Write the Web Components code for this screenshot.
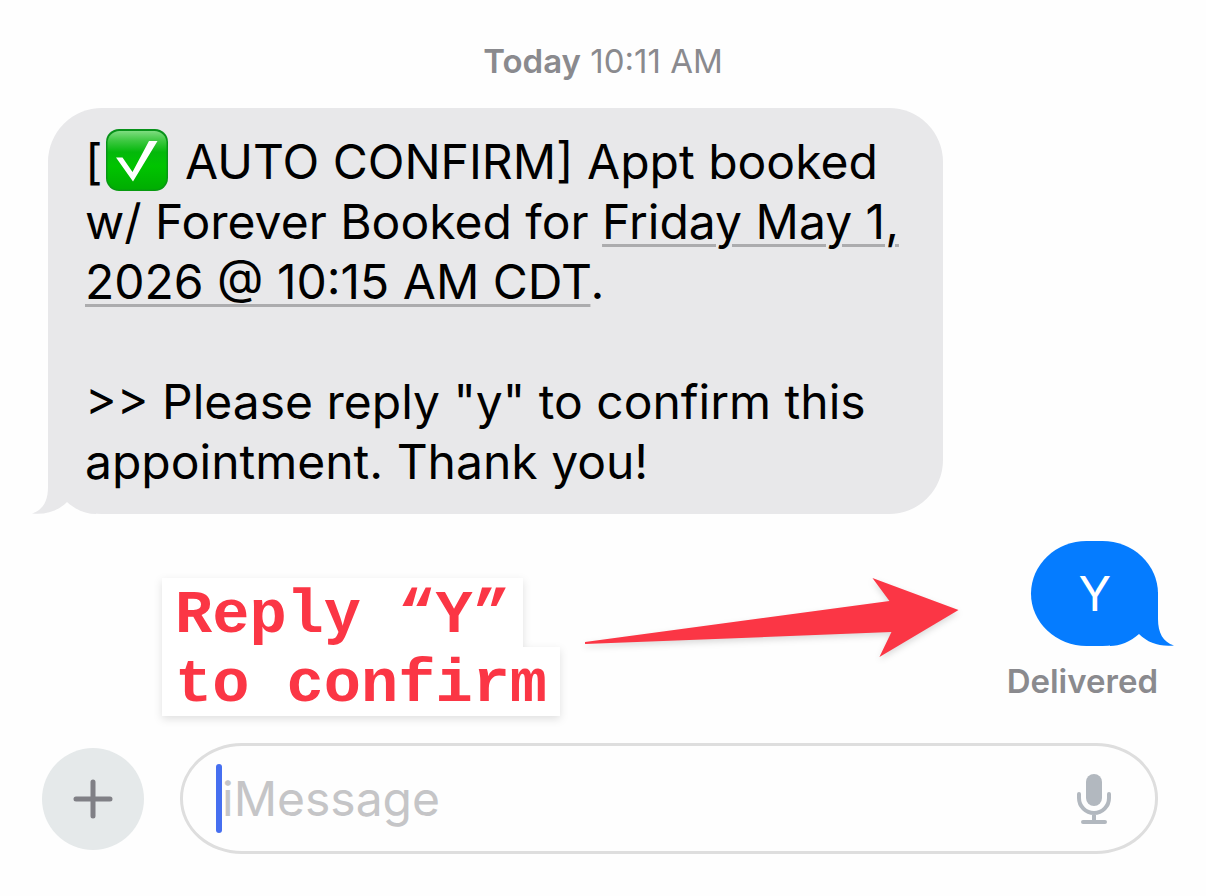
<!DOCTYPE html>
<html lang="en">
<head>
<meta charset="utf-8">
<meta name="viewport" content="width=device-width, initial-scale=1">
<title>Messages</title>
<style>
body {
    margin: 0;
    background: #fefefe;
    color: #000;
    font-family: Inter, "Liberation Sans", sans-serif;
}
</style>
</head>
<body>
<chat-thread>
    <time-stamp slot="time" day="Today">10:11 AM</time-stamp>
    <message-bubble>[<check-emoji></check-emoji> AUTO CONFIRM] Appt booked<br>w/ Forever Booked for <date-link>Friday May 1,<br>2026 @ 10:15 AM CDT</date-link>.<br><br>&gt;&gt; Please reply "y" to confirm this<br>appointment. Thank you!</message-bubble>
    <reply-row>
        <note-label slot="note"><span>Reply “Y”</span><span>to confirm</span></note-label>
        <note-arrow slot="arrow"></note-arrow>
        <message-bubble sent>Y</message-bubble>
        <span slot="status">Delivered</span>
    </reply-row>
    <message-composer slot="composer"></message-composer>
</chat-thread>

<script>
class ChatThread extends HTMLElement {
    constructor() {
        super();
        this.attachShadow({mode: 'open'}).innerHTML = `
        <style>
        :host {
            display: flex;
            flex-direction: column;
            box-sizing: border-box;
            min-height: 100vh;
            padding: 40px 48px 42px 42px;
        }

        main {
            display: flex;
            flex-direction: column;
            gap: 27px;
            padding: 26px 0 0 6px;
        }

        footer {
            margin-top: 27px;
        }
        </style>

        <slot name="time"></slot>
        <main><slot></slot></main>
        <footer><slot name="composer"></slot></footer>
        `;
    }
}

class TimeStamp extends HTMLElement {
    connectedCallback() {
        this.attachShadow({mode: 'open'}).innerHTML = `
        <style>
        :host {
            display: block;
            padding-left: 6px;
            color: #8a8a8e;
            font-size: 33px;
            line-height: 42px;
            text-align: center;
        }

        b {
            font-weight: 600;
        }
        </style>

        <b>${this.getAttribute('day')}</b> <slot></slot>
        `;
    }
}

class CheckEmoji extends HTMLElement {
    constructor() {
        super();
        this.attachShadow({mode: 'open'}).innerHTML = `
        <style>
        :host {
            display: inline-block;
            width: 62px;
            height: 50px;
            margin: -8px 4px 0 3px;
            vertical-align: baseline;
        }

        svg {
            display: block;
            width: 62px;
            height: 62px;
        }
        </style>

        <svg viewBox="0 0 62 62" role="img" aria-label="Check mark">
            <defs>
                <linearGradient id="face" x1="0" y1="0" x2="0" y2="1">
                    <stop offset="0" stop-color="#7edc80"/>
                    <stop offset=".16" stop-color="#3fc943"/>
                    <stop offset=".36" stop-color="#04b80b"/>
                    <stop offset=".6" stop-color="#00c400"/>
                    <stop offset="1" stop-color="#00ad02"/>
                </linearGradient>
                <linearGradient id="edge" x1="0" y1="0" x2="0" y2="1">
                    <stop offset="0" stop-color="#07911a"/>
                    <stop offset="1" stop-color="#079a10"/>
                </linearGradient>
            </defs>
            <rect width="62" height="62" rx="13" fill="url(#edge)"/>
            <rect x="1.5" y="2" width="59" height="58.5" rx="12" fill="url(#face)"/>
            <path d="M10 28.5h6.5l10 14.5L43 12h8.500L27 52.500z" fill="#fff"/>
        </svg>
        `;
    }
}

class DateLink extends HTMLElement {
    constructor() {
        super();
        this.attachShadow({mode: 'open'}).innerHTML = `<style>
        :host {
            display: inline;
        }

        a {
            color: inherit;
            text-decoration: underline 3px #acacae;
            text-underline-offset: 5px;
        }
        </style><a href="#"><slot></slot></a>`;
    }
}

class MessageBubble extends HTMLElement {
    constructor() {
        super();
        this.attachShadow({mode: 'open'}).innerHTML = `
        <style>
        :host {
            display: block;
            position: relative;
            isolation: isolate;
            box-sizing: border-box;
            width: fit-content;
            padding: 24px 44px 22px 37px;
            border-radius: 54px;
            background: #e8e8ea;
            color: #000;
            font-size: 48px;
            line-height: 60px;
        }

        :host([sent]) {
            padding: 23px 47px 22px;
            border-radius: 56px / 53px;
            background: #057cff;
            color: #fff;
        }

        /* the tail hangs out of the bubble's bottom corner */
        svg {
            position: absolute;
            z-index: -1;
            bottom: 0;
            left: -16px;
            width: 64px;
            height: 54px;
            fill: #e8e8ea;
        }

        :host([sent]) svg {
            left: auto;
            right: -16px;
            fill: #057cff;
            transform: scaleX(-1);
        }

        .gap {
            fill: #fefefe;
        }
        </style>

        <svg viewBox="0 0 64 54" aria-hidden="true">
            <path class="gap" d="M16 54V40L35 41L64 54z"/>
            <path d="M16 0V27C16 41 11 50 0 53.500C14 55 26 51 35 42C44 50 54 54 64 54V0z"/>
        </svg>
        <slot></slot>
        `;
    }
}

class ReplyRow extends HTMLElement {
    constructor() {
        super();
        this.attachShadow({mode: 'open'}).innerHTML = `
        <style>
        :host {
            display: flex;
            align-items: flex-start;
            padding-left: 114px;
        }

        .note {
            padding-top: 37px;
        }

        .arrow {
            flex: 1;
            padding: 37px 47px 0 25px;
        }

        .reply {
            display: flex;
            flex-direction: column;
            align-items: flex-end;
            gap: 14px;
        }

        .status {
            color: #8a8a8e;
            font-size: 33px;
            font-weight: 600;
            line-height: 42px;
        }
        </style>

        <div class="note"><slot name="note"></slot></div>
        <div class="arrow"><slot name="arrow"></slot></div>
        <div class="reply">
            <slot></slot>
            <div class="status"><slot name="status"></slot></div>
        </div>
        `;
    }
}

class NoteLabel extends HTMLElement {
    constructor() {
        super();
        this.attachShadow({mode: 'open'}).innerHTML = `
        <style>
        :host {
            display: flex;
            flex-direction: column;
            align-items: flex-start;
            color: #fb3645;
            font-family: "Liberation Mono", monospace;
            font-size: 62px;
            font-weight: 700;
            line-height: 63px;
            filter: drop-shadow(0 3px 4px rgba(0, 0, 0, .12));
        }

        ::slotted(span) {
            padding: 6px 13px 0;
            background: #fff;
            white-space: nowrap;
        }
        </style>

        <slot></slot>
        `;
    }
}

class NoteArrow extends HTMLElement {
    constructor() {
        super();
        this.attachShadow({mode: 'open'}).innerHTML = `
        <style>
        :host {
            display: block;
        }

        svg {
            display: block;
            width: 100%;
            overflow: visible;
            fill: #fb3645;
            filter: drop-shadow(0 3px 3px rgba(0, 0, 0, .14));
        }
        </style>

        <svg viewBox="0 0 374 80" aria-hidden="true">
            <path d="M0 64L304 23L287 0L373 32L294 79L306 54L0 66z"/>
        </svg>
        `;
    }
}

class MessageComposer extends HTMLElement {
    constructor() {
        super();
        this.attachShadow({mode: 'open'}).innerHTML = `
        <style>
        :host {
            display: flex;
            align-items: center;
            gap: 36px;
        }

        button {
            display: flex;
            align-items: center;
            justify-content: center;
            flex: none;
            padding: 0;
            border: 0;
            background: none;
            cursor: pointer;
        }

        .add {
            width: 102px;
            height: 102px;
            border-radius: 50%;
            background: #e5e9ea;
        }

        .field {
            display: flex;
            align-items: center;
            flex: 1;
            box-sizing: border-box;
            min-width: 0;
            height: 111px;
            padding: 0 43px 0 33px;
            border: 3px solid #dedede;
            border-radius: 62px / 55px;
        }

        .caret {
            flex: none;
            width: 6px;
            height: 69px;
            border-radius: 3px;
            background: #466ff0;
        }

        input {
            flex: 1;
            min-width: 0;
            height: 69px;
            padding: 0;
            border: 0;
            outline: 0;
            background: none;
            color: #000;
            font: inherit;
            font-size: 48px;
        }

        input::placeholder {
            color: #c5c5c7;
            opacity: 1;
        }
        </style>

        <button class="add" type="button" aria-label="Add attachment">
            <svg width="40" height="40" viewBox="0 0 40 40" fill="none" stroke="#808086" stroke-width="5" stroke-linecap="round">
                <path d="M3 20h34M20 3v34"/>
            </svg>
        </button>
        <div class="field">
            <span class="caret"></span>
            <input type="text" placeholder="iMessage" aria-label="iMessage">
            <button type="button" aria-label="Dictate">
                <svg width="36" height="52" viewBox="0 0 36 52" fill="none" stroke="#b2b8bf" stroke-width="4" stroke-linecap="round">
                    <rect x="10" y="1" width="16" height="32" rx="8" fill="#b2b8bf" stroke="none"/>
                    <path d="M3 21v4a15 15 0 0 0 30 0v-4M18 41v7M7 49h22"/>
                </svg>
            </button>
        </div>
        `;
    }
}

customElements.define('chat-thread', ChatThread);
customElements.define('time-stamp', TimeStamp);
customElements.define('check-emoji', CheckEmoji);
customElements.define('date-link', DateLink);
customElements.define('message-bubble', MessageBubble);
customElements.define('reply-row', ReplyRow);
customElements.define('note-label', NoteLabel);
customElements.define('note-arrow', NoteArrow);
customElements.define('message-composer', MessageComposer);
</script>
</body>
</html>
